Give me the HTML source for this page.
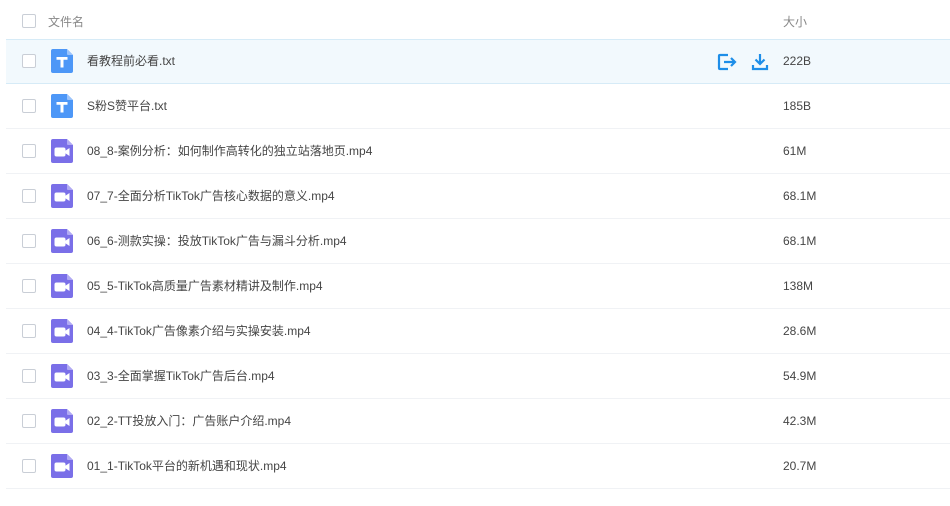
<!DOCTYPE html>
<html><head><meta charset="utf-8"><style>
*{margin:0;padding:0;box-sizing:border-box}
body{width:950px;height:506px;background:#fff;font-family:"Liberation Sans","Noto Sans CJK SC",sans-serif;font-size:12px;color:#454545;position:relative;overflow:hidden}
.hdr{position:absolute;left:0;top:0;width:950px;height:39px;color:#888}
.cb{position:absolute;left:22px;width:14px;height:14px;border:1px solid #c9ced6;border-radius:2px;background:#fff}
.row{position:absolute;left:6px;width:944px;height:45px;border-bottom:1px solid #f0f2f5}
.row.h{background:#f2f9fd;border-top:1px solid #d6ebf7;border-bottom:1px solid #d6ebf7}
.row .cb{left:16px;top:15px}
.ic{position:absolute;left:45px;top:10px;width:22px;height:24px}
.nm{position:absolute;left:81px;top:15px;line-height:14px;white-space:nowrap}
.sz{position:absolute;left:777px;top:15px;line-height:14px}
</style></head><body>
<div class="hdr"><div class="cb" style="top:14px"></div><span style="position:absolute;left:48px;top:13px">文件名</span><span style="position:absolute;left:783px;top:13px">大小</span></div>
<div id="rows"></div>
<script>
var T='<svg class="ic" viewBox="0 0 22 24"><path d="M2 0H16L22 6V22Q22 24 20 24H2Q0 24 0 22V2Q0 0 2 0Z" fill="#4d97f7"/><path d="M16 0L22 6H17Q16 6 16 5Z" fill="#9cc4fb"/><path d="M5.5 8H16.5V10.8H12.5V18.5H9.5V10.8H5.5Z" fill="#fff"/></svg>';
var V='<svg class="ic" viewBox="0 0 22 24"><path d="M2 0H16L22 6V22Q22 24 20 24H2Q0 24 0 22V2Q0 0 2 0Z" fill="#7a6fe8"/><path d="M16 0L22 6H17Q16 6 16 5Z" fill="#b1aaf3"/><rect x="3.5" y="8.5" width="11" height="9" rx="2" fill="#fff"/><path d="M14 12L18.5 9V17L14 14Z" fill="#fff"/></svg>';
var d=[[T,"看教程前必看.txt","222B"],[T,"S粉S赞平台.txt","185B"],[V,"08_8-案例分析：如何制作高转化的独立站落地页.mp4","61M"],[V,"07_7-全面分析TikTok广告核心数据的意义.mp4","68.1M"],[V,"06_6-测款实操：投放TikTok广告与漏斗分析.mp4","68.1M"],[V,"05_5-TikTok高质量广告素材精讲及制作.mp4","138M"],[V,"04_4-TikTok广告像素介绍与实操安装.mp4","28.6M"],[V,"03_3-全面掌握TikTok广告后台.mp4","54.9M"],[V,"02_2-TT投放入门：广告账户介绍.mp4","42.3M"],[V,"01_1-TikTok平台的新机遇和现状.mp4","20.7M"]];
var h='';
d.forEach(function(r,i){
 h+='<div class="row'+(i==0?' h':'')+'" style="top:'+(39+i*45)+'px'+(i==0?';height:45px':'')+'"><div class="cb"'+(i==0?' style="top:14px"':'')+'></div>'+r[0].replace('class="ic"','class="ic"'+(i==0?' style="top:9px"':''))+'<div class="nm"'+(i==0?' style="top:14px"':'')+'>'+r[1]+'</div><div class="sz"'+(i==0?' style="top:14px"':'')+'>'+r[2]+'</div>';
 if(i==0){h+='<svg style="position:absolute;left:711px;top:13px" width="20" height="18" viewBox="0 0 20 18" fill="none" stroke="#1e8ee8" stroke-width="2.2"><path d="M11 2H3Q2 2 2 3V15Q2 16 3 16H11"/><path d="M7 9H18M14 5L18 9L14 13"/></svg><svg style="position:absolute;left:745px;top:13px" width="18" height="18" viewBox="0 0 18 18" fill="none" stroke="#1e8ee8" stroke-width="2.2"><path d="M9 1V11M4.5 6.5L9 11L13.5 6.5"/><path d="M2 12V16H16V12"/></svg>';}
 h+='</div>';
});
document.getElementById('rows').innerHTML=h;
</script>
</body></html>
